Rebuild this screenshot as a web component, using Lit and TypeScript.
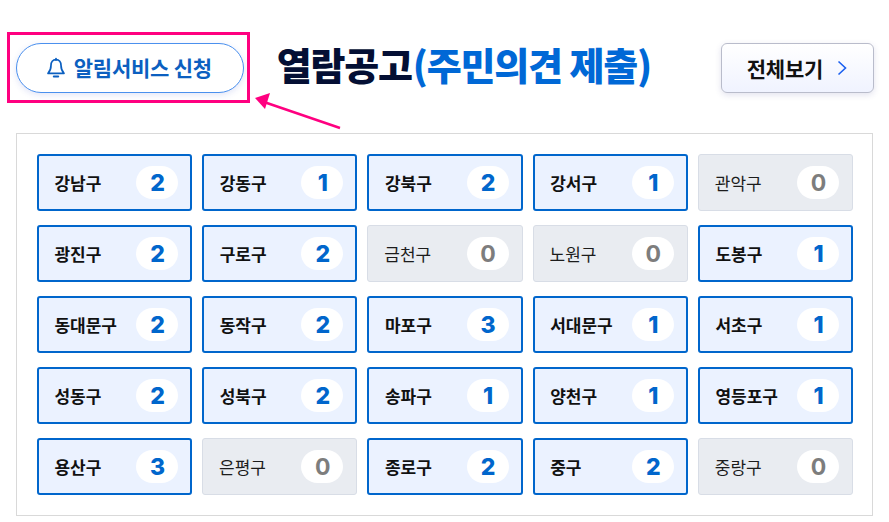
import { LitElement, html, css } from "lit";
import { customElement } from "lit/decorators.js";

const DATA: [string, number][] = [
  ["강남구", 2], ["강동구", 1], ["강북구", 2], ["강서구", 1], ["관악구", 0],
  ["광진구", 2], ["구로구", 2], ["금천구", 0], ["노원구", 0], ["도봉구", 1],
  ["동대문구", 2], ["동작구", 2], ["마포구", 3], ["서대문구", 1], ["서초구", 1],
  ["성동구", 2], ["성북구", 2], ["송파구", 1], ["양천구", 1], ["영등포구", 1],
  ["용산구", 3], ["은평구", 0], ["종로구", 2], ["중구", 2], ["중랑구", 0],
];

@customElement("app-root")
export class AppRoot extends LitElement {
  static styles = css`
    :host {
      display: block;
      width: 889px;
      height: 522px;
      position: relative;
      background: #fff;
      overflow: hidden;
      font-family: "Noto Sans CJK KR", "Noto Sans", sans-serif;
    }
    .page { padding: 43px 15px 0 15.8px; display: flex; flex-direction: column; gap: 40px; }
    .head { display: flex; align-items: flex-start; height: 50px; }
    .alarm {
      width: 228px; height: 50px; box-sizing: border-box;
      border: 1px solid #4a90ee; border-radius: 25px; background: #fff;
      box-shadow: 0 2px 6px rgba(60, 80, 200, .15);
      display: flex; align-items: center; justify-content: center; gap: 8px;
      color: #0b5fc0; font-size: 21px; font-weight: 700; letter-spacing: -.25px;
      line-height: 46px; padding-bottom: 2px;
    }
    .alarm svg { width: 20px; height: 23px; flex: none; margin-top: 2px; margin-left: -2px; }
    .title {
      margin: -4px 0 0 33px; flex: 1; font-size: 38px; font-weight: 900; line-height: 50px;
      letter-spacing: -1.2px; color: #040f34; white-space: nowrap;
    }
    .title span { color: #0068d6; margin-left: 1px; }
    .all {
      width: 153px; height: 50px; box-sizing: border-box;
      border: 1px solid #b9bccb; border-radius: 6px;
      background: linear-gradient(#ffffff, #f0f3ff);
      box-shadow: 0 2px 6px rgba(60, 60, 140, .15);
      display: flex; align-items: center; justify-content: center; gap: 13px;
      color: #111; font-size: 21px; font-weight: 700; letter-spacing: -.2px;
    }
    .all svg { width: 12px; height: 16px; }
    .panel {
      width: 857.4px; height: 383px; box-sizing: border-box;
      border: 1px solid #d9d9d9; padding: 20px;
      display: grid; grid-template-columns: repeat(5, 155.25px); column-gap: 10px;
      grid-auto-rows: 57px; row-gap: 14px; background: #fff;
    }
    .cell {
      box-sizing: border-box; border: 2px solid #0066cc; border-radius: 3px;
      background: #ebf2ff; display: flex; align-items: center; justify-content: space-between;
      padding: 0 12px 0 15.6px; font-size: 17px; font-weight: 700; color: #111; letter-spacing: 0;
    }
    .cell.off {
      border: 1px solid #d8dde6; background: #e9ecf1; font-weight: 400; color: #1c1c1c;
      padding: 0 13px 0 16px;
    }
    .badge {
      width: 42px; height: 33px; border-radius: 17px; background: #fff;
      display: flex; align-items: center; justify-content: center; letter-spacing: 0;
      color: #0066cc; font: 800 23px "Inter", "Noto Sans", sans-serif; padding-left: 1px; box-sizing: border-box;
    }
    .off .badge { color: #7d7d7d; font-weight: 700; }
    .mark {
      position: absolute; left: 7px; top: 32px; width: 243px; height: 71px; box-sizing: border-box;
      border: 3px solid #ff0080; pointer-events: none;
    }
    .arrow { position: absolute; left: 250px; top: 92px; width: 95px; height: 42px; pointer-events: none; }
  `;

  render() {
    return html`
      <div class="page">
        <div class="head">
          <div class="alarm">
            <svg viewBox="0 0 20 22" fill="none" stroke="#0b5fc0" stroke-width="1.7" stroke-linejoin="round" stroke-linecap="round">
              <path d="M10 2.2c-3.3 0-5 2.6-5 5.6 0 4-1 6-3 8h16c-2-2-3-4-3-8 0-3-1.700-5.600-5-5.600Z"/>
              <path d="M10 1v1.200"/>
              <path d="M7.800 19h4.400" stroke-width="2"/>
            </svg>
            알림서비스 신청
          </div>
          <h1 class="title">열람공고<span>(주민의견 제출)</span></h1>
          <div class="all">
            전체보기
            <svg viewBox="0 0 12 16" fill="none" stroke="#1a5ff0" stroke-width="1.600"><path d="M2.500 1.500 9.500 8l-7 6.500"/></svg>
          </div>
        </div>
        <div class="panel">
          ${DATA.map(([n, c]) => html`
            <div class="cell ${c === 0 ? "off" : ""}">
              <span>${n}</span><span class="badge">${c}</span>
            </div>`)}
        </div>
      </div>
      <div class="mark"></div>
      <svg class="arrow" viewBox="0 0 95 42" fill="none">
        <path d="M90 36 14 10" stroke="#ff0080" stroke-width="2.500"/>
        <path d="M5 6 20 1 15 17Z" fill="#ff0080"/>
      </svg>
    `;
  }
}
